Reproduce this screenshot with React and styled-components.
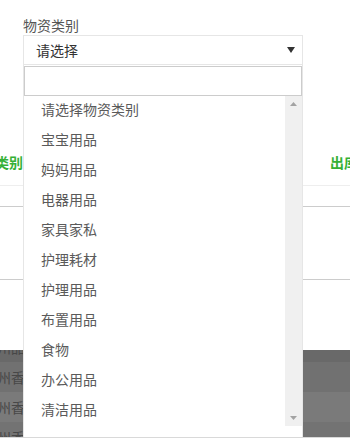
import React from "react";
import styled, { createGlobalStyle } from "styled-components";

const Global = createGlobalStyle`
  html, body { margin: 0; padding: 0; background: #fff; }
  body { font-family: "Noto Sans CJK SC", "Noto Sans", sans-serif; overflow: hidden; }
`;

const Page = styled.div`
  width: 350px;
  height: 441px;
  overflow: hidden;
  display: flex;
  flex-direction: column;
`;

const Field = styled.div`
  position: relative;
  z-index: 2;
  padding: 15px 0 0 23px;
`;

const Label = styled.div`
  font-size: 14px;
  line-height: 20px;
  color: #555;
`;

const Select = styled.div`
  position: relative;
  box-sizing: border-box;
  width: 280px;
  height: 30px;
  border: 1px solid #e6e6e6;
  display: flex;
  align-items: center;
  justify-content: space-between;
  padding: 0 7px 0 12px;
  font-size: 14px;
  color: #333;
`;

const Dropdown = styled.div`
  position: absolute;
  top: calc(100% + 1px);
  left: -1px;
  width: 280px;
  height: 372px;
  box-sizing: border-box;
  padding-top: 1px;
  background: #fff;
  border-left: 1px solid #e6e6e6;
  border-right: 1px solid #e6e6e6;
  display: flex;
  flex-direction: column;
`;

const Search = styled.input`
  box-sizing: border-box;
  width: 100%;
  height: 30px;
  margin: 0;
  border: 1px solid #ccc;
  outline: none;
  font: inherit;
`;

const ListWrap = styled.div`
  display: flex;
  height: 330px;
`;

const Options = styled.div`
  flex: 1;
`;

const Option = styled.div`
  box-sizing: border-box;
  height: 30px;
  line-height: 26px;
  padding-left: 17px;
  font-size: 14px;
  color: #5a5a5a;
  white-space: nowrap;
`;

const Scrollbar = styled.div`
  width: 17px;
  background: #f0f0f0;
  display: flex;
  flex-direction: column;
  justify-content: space-between;
  align-items: center;
  padding: 6px 0 6px;
  box-sizing: border-box;
`;

const Tabs = styled.div`
  display: flex;
  justify-content: space-between;
  box-sizing: border-box;
  height: 121px;
  padding-top: 85px;
  border-bottom: 1px solid #eee;
`;

const Tab = styled.div`
  font-size: 14px;
  line-height: 24px;
  font-weight: bold;
  color: #35b035;
  white-space: nowrap;
  flex: none;
  margin-left: ${(p) => p.$ml || "0"};
  margin-right: ${(p) => p.$mr || "0"};
`;

const Band = styled.div`
  box-sizing: border-box;
  height: ${(p) => p.$h}px;
  border-bottom: ${(p) => (p.$line ? `1px solid ${p.$line}` : "none")};
  flex: none;
`;

const DarkTable = styled.div`
  height: 87px;
  overflow: hidden;
  flex: none;
`;

const DarkRows = styled.div`
  margin-top: -18px;
`;

const DarkRow = styled.div`
  height: 30px;
  line-height: 30px;
  background: ${(p) => p.$bg};
  color: #474747;
  font-size: 14px;
  white-space: nowrap;
  text-indent: -3px;
`;

const Footer = styled.div`
  flex: 1;
  border-top: 1px solid #d9d9d9;
`;

const Caret = ({ dir = "down", color, w = 7, h = 4 }) => (
  <svg width={w} height={h} viewBox={`0 0 ${w} ${h}`}>
    {dir === "down" ? (
      <polygon points={`0,0 ${w},0 ${w / 2},${h}`} fill={color} />
    ) : (
      <polygon points={`0,${h} ${w},${h} ${w / 2},0`} fill={color} />
    )}
  </svg>
);

const options = [
  "请选择物资类别",
  "宝宝用品",
  "妈妈用品",
  "电器用品",
  "家具家私",
  "护理耗材",
  "护理用品",
  "布置用品",
  "食物",
  "办公用品",
  "清洁用品",
];

const darkRows = [
  { bg: "#696969", t: "州品" },
  { bg: "#717171", t: "州香港" },
  { bg: "#7a7a7a", t: "州香港" },
  { bg: "#737373", t: "州香港" },
];

export default function App() {
  return (
    <>
      <Global />
      <Page>
        <Field>
          <Label>物资类别</Label>
          <Select>
            <span>请选择</span>
            <Caret dir="down" color="#333" w={8} h={6} />
            <Dropdown>
              <Search type="text" />
              <ListWrap>
                <Options>
                  {options.map((o) => (
                    <Option key={o}>{o}</Option>
                  ))}
                </Options>
                <Scrollbar>
                  <Caret dir="up" color="#a3a3a3" />
                  <Caret dir="down" color="#a3a3a3" />
                </Scrollbar>
              </ListWrap>
            </Dropdown>
          </Select>
        </Field>
        <Tabs>
          <Tab $ml="-5px">类别</Tab>
          <Tab $mr="-36px">出库管理</Tab>
        </Tabs>
        <Band $h={21} $line="#ccc" />
        <Band $h={73} $line="#ccc" />
        <Band $h={70} />
        <DarkTable>
          <DarkRows>
            {darkRows.map((r, i) => (
              <DarkRow key={i} $bg={r.bg}>
                {r.t}
              </DarkRow>
            ))}
          </DarkRows>
        </DarkTable>
        <Footer />
      </Page>
    </>
  );
}
